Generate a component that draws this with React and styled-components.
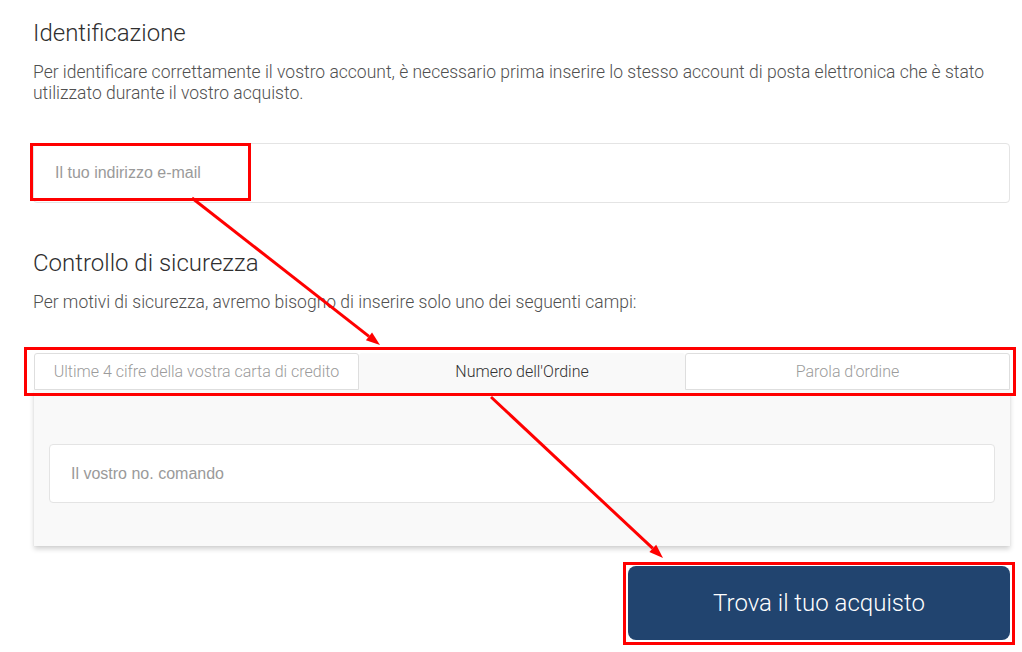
import React from "react";
import styled, { createGlobalStyle } from "styled-components";

const Global = createGlobalStyle`
  html, body { margin: 0; padding: 0; background: #fff; }
  body { font-family: Roboto, "Liberation Sans", sans-serif; }
  * { box-sizing: border-box; }
`;

const Page = styled.div`
  position: relative;
  width: 1022px;
  height: 652px;
  padding: 19px 12px 0 33px;
  overflow: hidden;
`;

const Heading = styled.h2`
  margin: 0 0 15px;
  font-family: Roboto, sans-serif;
  font-weight: 300;
  font-size: 24px;
  line-height: 28px;
  color: #2f2f2f;
`;

const Text = styled.p`
  margin: 0 0 ${(p) => p.$mb || 0}px;
  font-family: Roboto, sans-serif;
  font-weight: 300;
  font-size: 17.5px;
  line-height: 21px;
  color: #505050;
`;

const Input = styled.div`
  height: ${(p) => p.$h || 60}px;
  display: flex;
  align-items: center;
  padding-left: 21px;
  background: #fff;
  border: 1px solid #e4e4e4;
  border-radius: 4px;
  font-family: "Liberation Sans", Arial, sans-serif;
  font-size: 16px;
  color: #9a9a9a;
`;

const Section = styled.div`
  margin-top: 46px;
`;

const Tabs = styled.div`
  display: grid;
  grid-template-columns: 325px 326px 325px;
  margin-left: 1px;
  width: 976px;
  height: 37px;
`;

const Tab = styled.div`
  display: flex;
  align-items: center;
  justify-content: center;
  font-family: Roboto, sans-serif;
  font-weight: 300;
  font-size: 16px;
  color: ${(p) => (p.$active ? "#333" : "#9b9b9b")};
  background: ${(p) => (p.$active ? "#f9f9f9" : "#fff")};
  border: ${(p) => (p.$active ? "none" : "1px solid #dedede")};
  border-radius: 3px 3px 0 0;
`;

const Panel = styled.div`
  margin-left: 1px;
  width: 976px;
  background: #f9f9f9;
  padding: 54px 15px 43px;
  box-shadow: 0 3px 5px rgba(0, 0, 0, 0.18), 0 0 1px rgba(0, 0, 0, 0.08);
`;

const Actions = styled.div`
  display: flex;
  justify-content: flex-end;
  margin-top: 20px;
`;

const Button = styled.button`
  width: 382px;
  height: 74px;
  background: #21446f;
  border: none;
  border-radius: 8px;
  color: #fff;
  font-family: Roboto, sans-serif;
  font-weight: 300;
  font-size: 24px;
`;

const RedBox = styled.div`
  position: absolute;
  border: 3px solid #f00;
  pointer-events: none;
`;

const Overlay = styled.svg`
  position: absolute;
  left: 0;
  top: 0;
  pointer-events: none;
`;

function Arrow({ x1, y1, x2, y2 }) {
  const a = Math.atan2(y2 - y1, x2 - x1);
  const len = 14, w = 5;
  const bx = x2 - len * Math.cos(a), by = y2 - len * Math.sin(a);
  const px = -Math.sin(a) * w, py = Math.cos(a) * w;
  return (
    <g>
      <line x1={x1} y1={y1} x2={bx} y2={by} stroke="#f00" strokeWidth="3" />
      <polygon points={`${x2},${y2} ${bx + px},${by + py} ${bx - px},${by - py}`} fill="#f00" />
    </g>
  );
}

export default function App() {
  return (
    <>
      <Global />
      <Page>
        <Heading>Identificazione</Heading>
        <Text $mb={39}>
          Per identificare correttamente il vostro account, è necessario prima inserire lo stesso account di posta elettronica che è stato utilizzato durante il vostro acquisto.
        </Text>
        <Input>Il tuo indirizzo e-mail</Input>

        <Section>
          <Heading>Controllo di sicurezza</Heading>
          <Text $mb={40}>Per motivi di sicurezza, avremo bisogno di inserire solo uno dei seguenti campi:</Text>
          <Tabs>
            <Tab>Ultime 4 cifre della vostra carta di credito</Tab>
            <Tab $active>Numero dell'Ordine</Tab>
            <Tab>Parola d'ordine</Tab>
          </Tabs>
          <Panel>
            <Input $h={59}>Il vostro no. comando</Input>
          </Panel>
        </Section>

        <Actions>
          <Button>Trova il tuo acquisto</Button>
        </Actions>

        <RedBox style={{ left: 30, top: 143, width: 221, height: 58 }} />
        <RedBox style={{ left: 24, top: 347, width: 992, height: 49 }} />
        <RedBox style={{ left: 623, top: 562, width: 392, height: 83 }} />
        <Overlay width="1022" height="652">
          <Arrow x1={192} y1={198} x2={380} y2={345} />
          <Arrow x1={491} y1={397} x2={663} y2={558} />
        </Overlay>
      </Page>
    </>
  );
}
